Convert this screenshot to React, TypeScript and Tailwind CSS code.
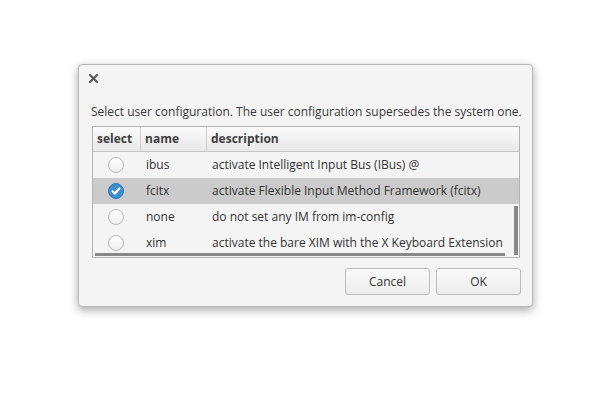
import React from "react";

const rows = [
  { name: "ibus", desc: "activate Intelligent Input Bus (IBus) @", sel: false },
  { name: "fcitx", desc: "activate Flexible Input Method Framework (fcitx)", sel: true },
  { name: "none", desc: "do not set any IM from im-config", sel: false },
  { name: "xim", desc: "activate the bare XIM with the X Keyboard Extension", sel: false },
];

function Radio({ checked }: { checked: boolean }) {
  if (checked) {
    return (
      <svg width="16" height="16" viewBox="0 0 16 16">
        <circle cx="8" cy="8" r="7.5" fill="#3d8fd1" stroke="#2a76b8" />
        <path d="M4.5 8.2 L7 10.6 L11.4 5.6" fill="none" stroke="#fff" strokeWidth="2.2" strokeLinecap="round" strokeLinejoin="round" />
      </svg>
    );
  }
  return (
    <svg width="16" height="16" viewBox="0 0 16 16">
      <defs>
        <linearGradient id="rg" x1="0" y1="0" x2="0" y2="1">
          <stop offset="0" stopColor="#ffffff" />
          <stop offset="1" stopColor="#eeeeee" />
        </linearGradient>
      </defs>
      <circle cx="8" cy="8" r="7.5" fill="url(#rg)" stroke="#b8b8b8" />
    </svg>
  );
}

export default function App() {
  return (
    <div
      className="w-[612px] h-[400px] bg-white pt-[64px] pl-[78px]"
      style={{ fontFamily: '"Open Sans", "Noto Sans", sans-serif' }}
    >
      <div className="w-[455px] h-[243px] bg-[#f4f4f4] border border-[#b9b9b9] rounded-[4px] shadow-[0_3px_10px_rgba(0,0,0,0.35)] flex flex-col text-[12px] text-[#333]">
        <div className="h-[24px] flex items-center pl-[10px] pt-[2px]">
          <svg width="9" height="9" viewBox="0 0 9 9">
            <path d="M1 1 L8 8 M8 1 L1 8" stroke="#555" strokeWidth="2" strokeLinecap="square" />
          </svg>
        </div>
        <div className="pl-[12px] mt-[14px] leading-[18px] text-[#3a3a3a] whitespace-nowrap">
          Select user configuration. The user configuration supersedes the system one.
        </div>
        <div className="ml-[13px] mr-[12px] mt-[5px] h-[132px] border border-[#b3b3b3] bg-[#f4f4f4] relative overflow-hidden">
          <div className="flex h-[25px] border-b border-[#c4c4c4] bg-gradient-to-b from-[#fbfbfb] to-[#e9e9e9] font-bold text-[#404040]">
            <div className="w-[48px] shrink-0 border-r border-[#cfcfcf] flex items-center pl-[4px]">select</div>
            <div className="w-[66px] shrink-0 border-r border-[#cfcfcf] flex items-center pl-[4px]">name</div>
            <div className="flex-1 flex items-center pl-[4px]">description</div>
          </div>
          {rows.map((r) => (
            <div
              key={r.name}
              className={`flex h-[26px] items-center ${r.sel ? "bg-[#cbcbcb]" : ""}`}
            >
              <div className="w-[48px] shrink-0 flex justify-center pr-[2px]">
                <Radio checked={r.sel} />
              </div>
              <div className="w-[66px] shrink-0 pl-[5px]">{r.name}</div>
              <div className="flex-1 pl-[5px] whitespace-nowrap">{r.desc}</div>
            </div>
          ))}
          <div className="absolute left-[2px] right-[14px] bottom-[1px] h-[3px] bg-[#888]" />
          <div className="absolute right-[1px] top-[79px] bottom-[2px] w-[4px] bg-[#888]" />
        </div>
        <div className="flex justify-end gap-[6px] mr-[11px] mt-[10px]">
          <button className="w-[85px] h-[27px] border border-[#bdbdbd] rounded-[3px] bg-gradient-to-b from-[#fafafa] to-[#ededed] text-[#333] text-[12px]">
            Cancel
          </button>
          <button className="w-[85px] h-[27px] border border-[#bdbdbd] rounded-[3px] bg-gradient-to-b from-[#fafafa] to-[#ededed] text-[#333] text-[12px]">
            OK
          </button>
        </div>
      </div>
    </div>
  );
}
